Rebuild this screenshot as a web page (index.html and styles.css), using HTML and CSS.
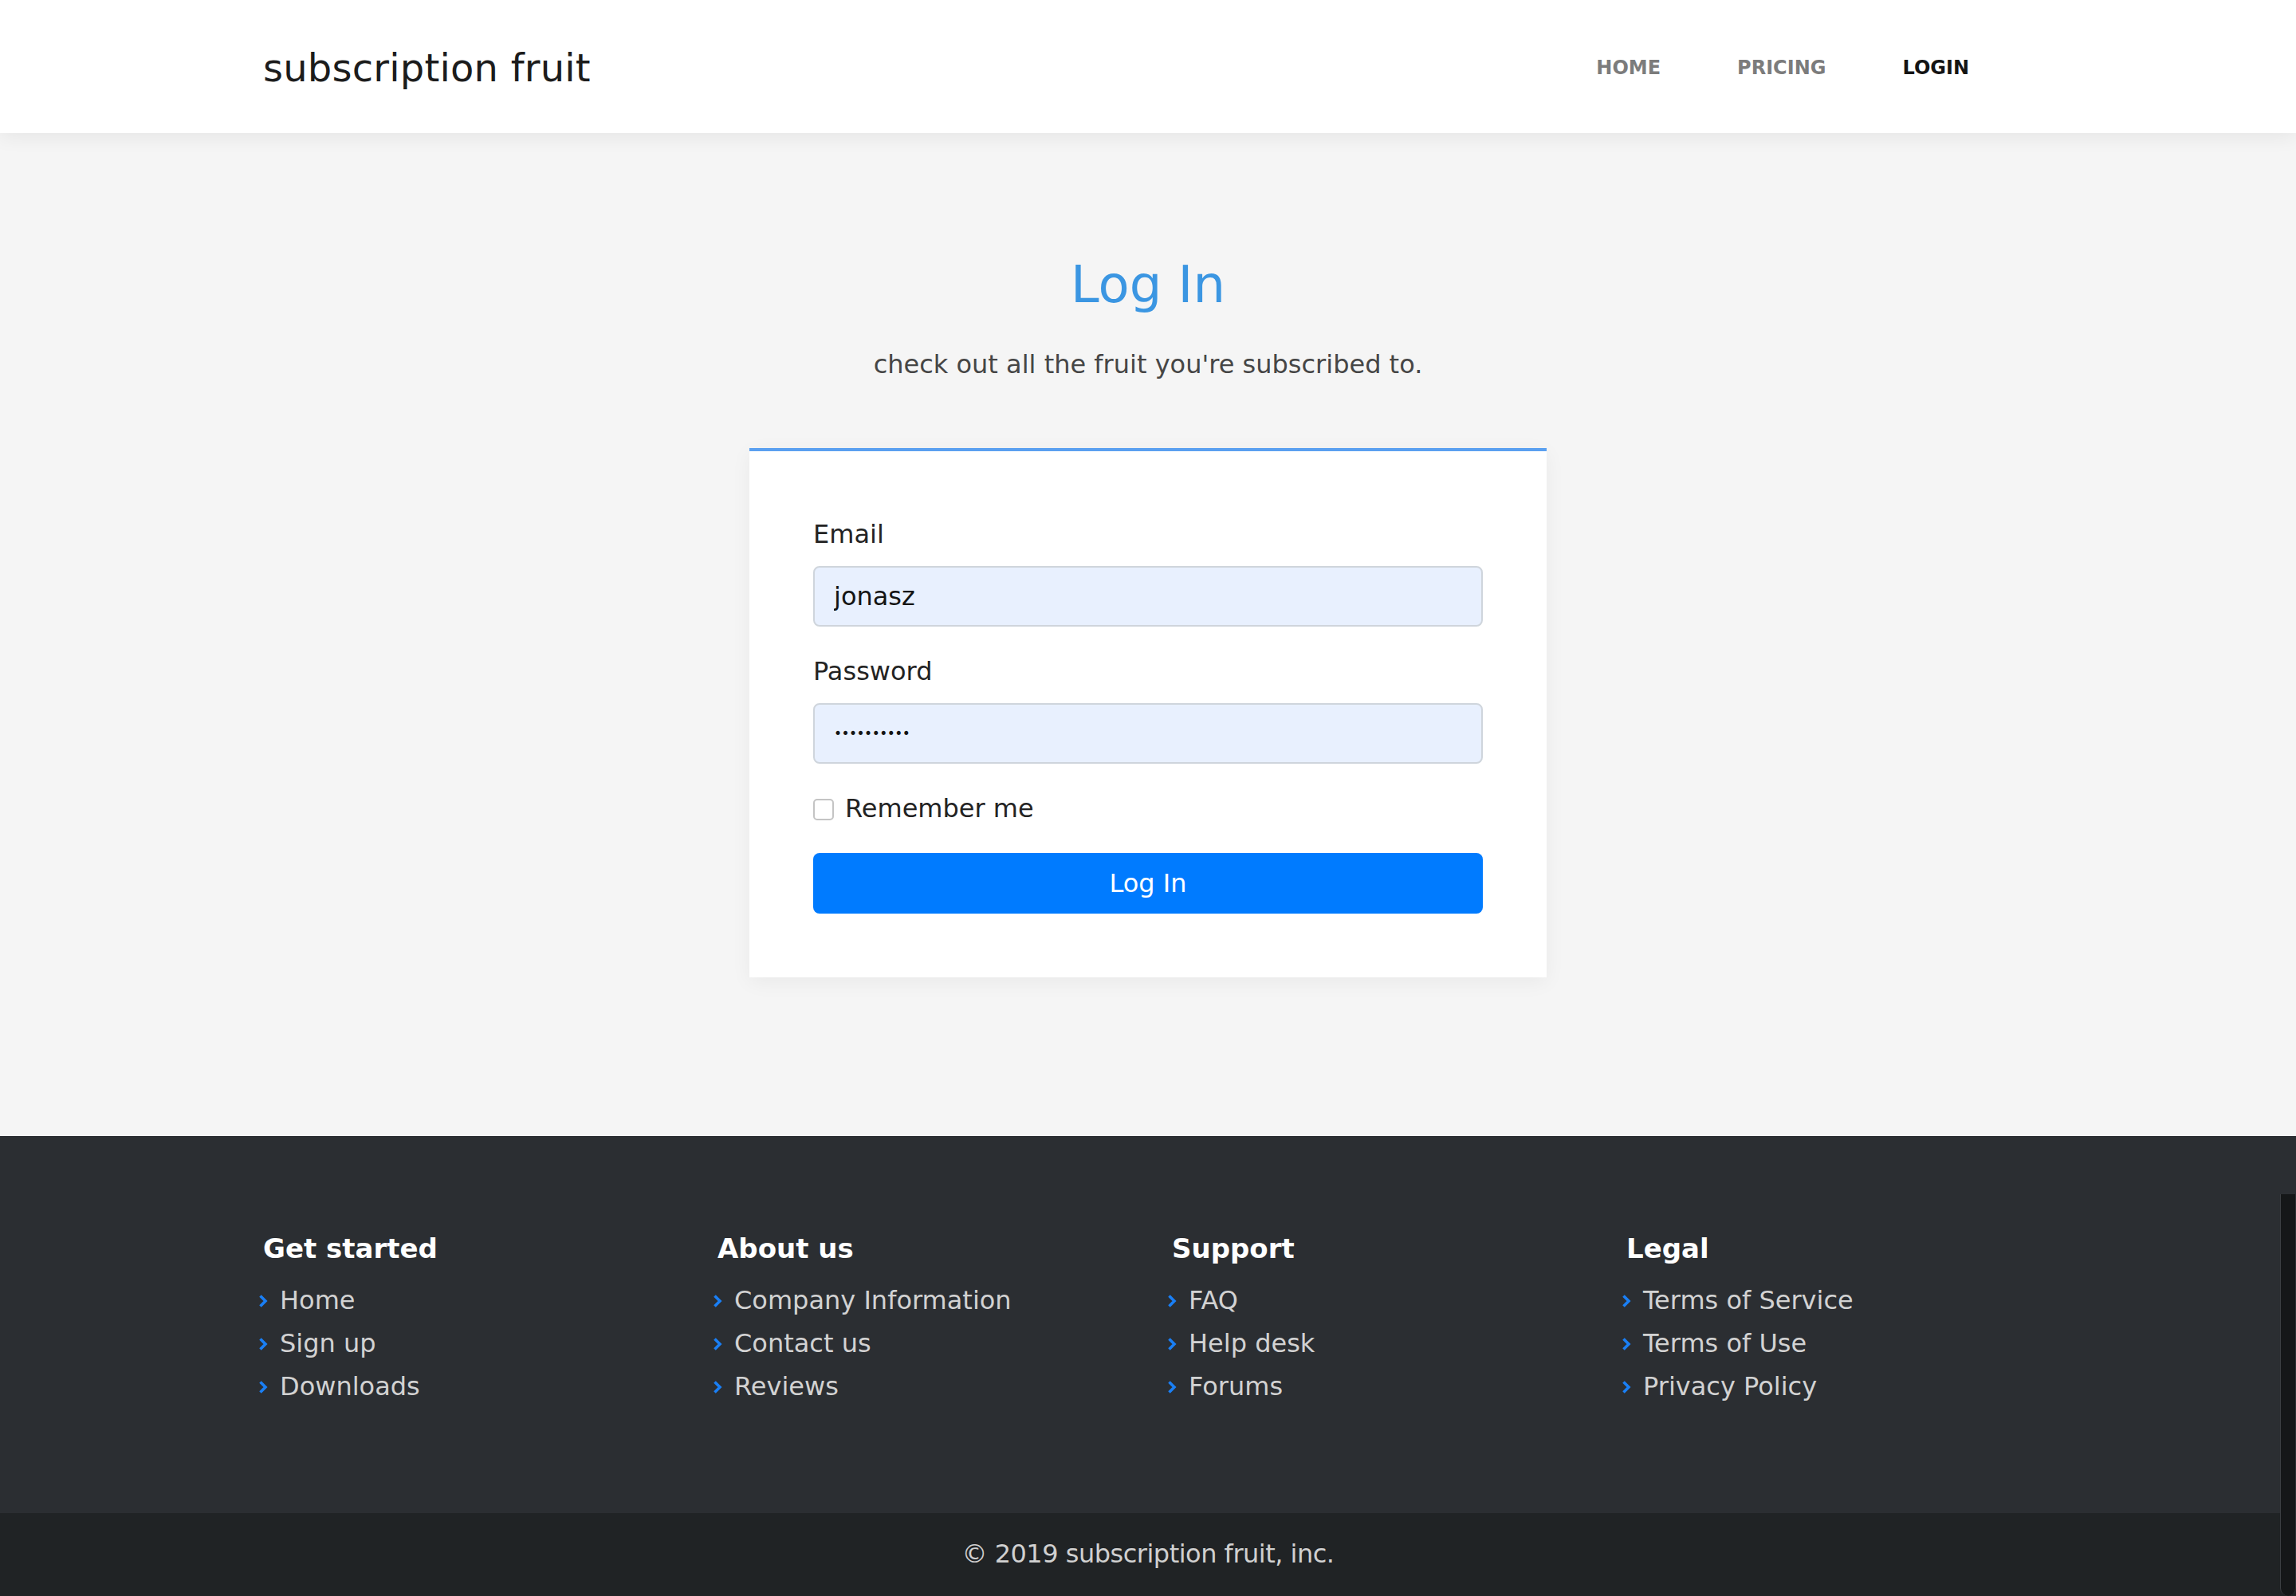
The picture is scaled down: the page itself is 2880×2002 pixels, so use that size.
FILE: index.html
```html
<!DOCTYPE html>
<html lang="en">
<head>
<meta charset="utf-8">
<title>subscription fruit - Log In</title>
<link rel="stylesheet" href="styles.css">
</head>
<body>
<header class="site-header">
  <div class="container header-inner">
    <a class="brand" href="#">subscription fruit</a>
    <nav class="nav">
      <a class="nav-link" href="#">HOME</a>
      <a class="nav-link" href="#">PRICING</a>
      <a class="nav-link active" href="#">LOGIN</a>
    </nav>
  </div>
</header>

<main class="main">
  <h1 class="title">Log In</h1>
  <p class="subtitle">check out all the fruit you're subscribed to.</p>
  <form class="card">
    <div class="form-group">
      <label class="label" for="email">Email</label>
      <input class="input" id="email" type="text" value="jonasz">
    </div>
    <div class="form-group">
      <label class="label" for="password">Password</label>
      <input class="input input-password" id="password" type="password" value="fruitfruit">
    </div>
    <div class="check-row">
      <input class="checkbox" id="remember" type="checkbox">
      <label class="check-label" for="remember">Remember me</label>
    </div>
    <button class="button" type="button">Log In</button>
  </form>
</main>

<footer class="footer">
  <div class="footer-grid">
    <div class="footer-col">
      <h3 class="footer-title">Get started</h3>
      <ul class="footer-list">
        <li><svg class="chev" viewBox="0 0 12 18"><polyline points="2.5,2.5 9,9 2.5,15.5"/></svg><a href="#">Home</a></li>
        <li><svg class="chev" viewBox="0 0 12 18"><polyline points="2.5,2.5 9,9 2.5,15.5"/></svg><a href="#">Sign up</a></li>
        <li><svg class="chev" viewBox="0 0 12 18"><polyline points="2.5,2.5 9,9 2.5,15.5"/></svg><a href="#">Downloads</a></li>
      </ul>
    </div>
    <div class="footer-col">
      <h3 class="footer-title">About us</h3>
      <ul class="footer-list">
        <li><svg class="chev" viewBox="0 0 12 18"><polyline points="2.5,2.5 9,9 2.5,15.5"/></svg><a href="#">Company Information</a></li>
        <li><svg class="chev" viewBox="0 0 12 18"><polyline points="2.5,2.5 9,9 2.5,15.5"/></svg><a href="#">Contact us</a></li>
        <li><svg class="chev" viewBox="0 0 12 18"><polyline points="2.5,2.5 9,9 2.5,15.5"/></svg><a href="#">Reviews</a></li>
      </ul>
    </div>
    <div class="footer-col">
      <h3 class="footer-title">Support</h3>
      <ul class="footer-list">
        <li><svg class="chev" viewBox="0 0 12 18"><polyline points="2.5,2.5 9,9 2.5,15.5"/></svg><a href="#">FAQ</a></li>
        <li><svg class="chev" viewBox="0 0 12 18"><polyline points="2.5,2.5 9,9 2.5,15.5"/></svg><a href="#">Help desk</a></li>
        <li><svg class="chev" viewBox="0 0 12 18"><polyline points="2.5,2.5 9,9 2.5,15.5"/></svg><a href="#">Forums</a></li>
      </ul>
    </div>
    <div class="footer-col">
      <h3 class="footer-title">Legal</h3>
      <ul class="footer-list">
        <li><svg class="chev" viewBox="0 0 12 18"><polyline points="2.5,2.5 9,9 2.5,15.5"/></svg><a href="#">Terms of Service</a></li>
        <li><svg class="chev" viewBox="0 0 12 18"><polyline points="2.5,2.5 9,9 2.5,15.5"/></svg><a href="#">Terms of Use</a></li>
        <li><svg class="chev" viewBox="0 0 12 18"><polyline points="2.5,2.5 9,9 2.5,15.5"/></svg><a href="#">Privacy Policy</a></li>
      </ul>
    </div>
  </div>
  <div class="copyright">© 2019 subscription fruit, inc.</div>
</footer>
<div class="scroll-track"></div>
</body>
</html>
```

FILE: styles.css
```css
* {
  box-sizing: border-box;
}

html, body {
  margin: 0;
  padding: 0;
}

body {
  position: relative;
  background: #f5f5f5;
  font-family: "DejaVu Sans", "Liberation Sans", sans-serif;
  color: #222;
}

a {
  text-decoration: none;
  color: inherit;
}

.container {
  width: 2280px;
  margin: 0 auto;
  padding: 0 30px;
}

/* Header */
.site-header {
  position: relative;
  z-index: 1;
  background: #fff;
  box-shadow: 0 4px 24px rgba(0, 0, 0, 0.07);
}

.header-inner {
  height: 167px;
  display: flex;
  align-items: center;
  justify-content: space-between;
}

.brand {
  font-size: 48px;
  color: #1c1c1c;
  line-height: 1;
  padding-top: 2px;
  letter-spacing: 0.2px;
}

.nav {
  display: flex;
  align-items: center;
  gap: 96px;
  padding-right: 80px;
  padding-top: 2px;
}

.nav-link {
  font-size: 24px;
  font-weight: 700;
  color: #7c7c7c;
}

.nav-link.active {
  color: #141414;
}

/* Main */
.main {
  padding: 152px 0 199px;
}

.title {
  margin: 0;
  text-align: center;
  font-size: 64px;
  line-height: 77px;
  font-weight: 400;
  color: #3b96e2;
}

.subtitle {
  margin: 37px 0 0;
  text-align: center;
  font-size: 32px;
  line-height: 48px;
  color: #464646;
}

.card {
  display: block;
  width: 1000px;
  margin: 81px auto 0;
  padding: 80px;
  background: #fff;
  border-top: 4px solid #5ba0f0;
  box-shadow: 0 6px 24px rgba(0, 0, 0, 0.05);
}

.form-group {
  margin-bottom: 32px;
}

.label {
  display: block;
  font-size: 32px;
  line-height: 48px;
  margin-bottom: 16px;
  color: #232323;
}

.input {
  display: block;
  width: 100%;
  height: 76px;
  padding: 0 24px;
  border: 2px solid #cfd5dc;
  border-radius: 8px;
  background: #e8f0fe;
  font-family: "DejaVu Sans", "Liberation Sans", sans-serif;
  font-size: 32px;
  color: #141414;
  outline: none;
}

.input-password {
  font-size: 17px;
  letter-spacing: -0.5px;
}

.check-row {
  display: flex;
  align-items: center;
  height: 48px;
  margin-bottom: 32px;
}

.checkbox {
  appearance: none;
  -webkit-appearance: none;
  width: 26px;
  height: 27px;
  margin: 2px 14px 0 0;
  border: 2px solid #c4c4c4;
  border-radius: 5px;
  background: #fff;
}

.check-label {
  font-size: 32px;
  line-height: 48px;
  color: #232323;
}

.button {
  display: block;
  width: 100%;
  height: 76px;
  border: none;
  border-radius: 8px;
  background: #007bff;
  color: #fff;
  font-family: "DejaVu Sans", "Liberation Sans", sans-serif;
  font-size: 32px;
  padding: 0;
}

/* Footer */
.footer {
  background: #2b2e32;
}

.footer-grid {
  width: 2280px;
  margin: 0 auto;
  display: grid;
  grid-template-columns: repeat(4, 1fr);
  padding-top: 121px;
  padding-bottom: 132px;
}

.footer-col {
  padding: 0 30px;
}

.footer-title {
  margin: 0 0 17px;
  font-size: 34px;
  line-height: 41px;
  font-weight: 700;
  color: #fff;
}

.footer-list {
  list-style: none;
  margin: 0 0 0 -6px;
  padding: 0;
}

.footer-list li {
  display: flex;
  align-items: center;
  height: 54px;
  font-size: 32px;
  color: #d2d2d2;
}

.chev {
  display: block;
  width: 12px;
  height: 18px;
  margin: 2px 15px 0 0;
  fill: none;
  stroke: #1a7ff5;
  stroke-width: 3.6;
  stroke-linejoin: miter;
  flex: none;
}

.copyright {
  background: #202325;
  text-align: center;
  font-size: 32px;
  line-height: 48px;
  letter-spacing: -0.5px;
  padding: 27px 0 29px;
  color: #d0d0d0;
}

.scroll-track {
  position: absolute;
  right: 0;
  bottom: 0;
  width: 20px;
  height: 504px;
  background: #151718;
  border-left: 1px solid #3c3f42;
  border-right: 1px solid #2c2f32;
  border-radius: 0 0 10px 10px;
}
```
